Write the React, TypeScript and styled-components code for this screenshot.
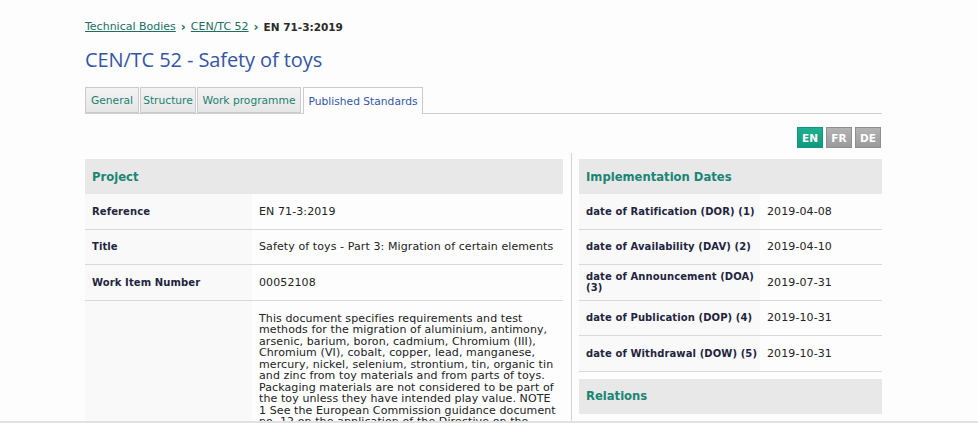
import React from 'react'
import styled, { createGlobalStyle } from 'styled-components'

const GlobalStyle = createGlobalStyle`
  html, body {
    margin: 0;
    padding: 0;
    background: #fdfdfd;
    font-family: "DejaVu Sans", Verdana, sans-serif;
    color: #222;
  }
`

const Page = styled.div`
  width: 797px;
  margin-left: 85px;
  padding-top: 20px;
`

const Breadcrumb = styled.nav`
  display: flex;
  align-items: center;
  gap: 5px;
  font-size: 11px;
  line-height: 14px;
`

const Crumb = styled.a`
  color: #1b6f63;
  text-decoration: underline;
`

const Sep = styled.span`
  color: #1b6f63;
  font-weight: bold;
  font-size: 12px;
`

const Current = styled.span`
  font-weight: bold;
  font-size: 10.5px;
  color: #2b2b2b;
`

const Title = styled.h1`
  margin: 12px 0 0;
  font-family: "Open Sans", sans-serif;
  font-weight: 400;
  font-size: 20px;
  line-height: 28px;
  color: #3456a4;
  letter-spacing: -0.1px;
`

const TabBar = styled.div`
  display: flex;
  gap: 1px;
  margin-top: 13px;
  border-bottom: 1px solid #cfcfcf;
  height: 26px;
`

const Tab = styled.div<{ $active?: boolean; $w: number }>`
  display: flex;
  align-items: center;
  justify-content: center;
  width: ${p => p.$w}px;
  box-sizing: border-box;
  white-space: nowrap;
  border: 1px solid #cbcbcb;
  border-bottom: ${p => (p.$active ? 'none' : '1px solid #cbcbcb')};
  background: ${p => (p.$active ? '#fdfdfd' : 'linear-gradient(#f3f3f3, #e6e6e6)')};
  height: ${p => (p.$active ? '27px' : '26px')};
  color: ${p => (p.$active ? '#3456a4' : '#1b7f72')};
  font-size: 10.7px;
  margin-left: ${p => (p.$active ? '1px' : '0')};
`

const LangBar = styled.div`
  display: flex;
  justify-content: flex-end;
  gap: 3px;
  margin-top: 13px;
  padding-right: 1px;
`

const Lang = styled.div<{ $active?: boolean }>`
  width: 26px;
  height: 21px;
  box-sizing: border-box;
  display: flex;
  align-items: center;
  justify-content: center;
  font-size: 10.5px;
  font-weight: bold;
  color: #fff;
  border: 1px solid ${p => (p.$active ? '#12957b' : '#8e8e8e')};
  background: ${p => (p.$active ? 'linear-gradient(#1fae90, #12987e)' : 'linear-gradient(#b3b3b3, #9a9a9a)')};
`

const Columns = styled.div`
  display: grid;
  grid-template-columns: 478px 319px;
  margin-top: 5px;
`

const LeftCol = styled.div`
  padding-top: 6px;
`

const RightCol = styled.div`
  margin-left: 8px;
  border-left: 1px solid #d2d2d2;
  padding: 6px 0 0 7px;
`

const Section = styled.div<{ $gap?: number }>`
  margin-top: ${p => p.$gap || 0}px;
`

const Header = styled.div`
  height: 35px;
  display: flex;
  align-items: center;
  padding: 0 7px;
  background: #e8e8e8;
  color: #1a8573;
  font-weight: bold;
  font-size: 11.6px;
`

const Row = styled.div<{ $label: number }>`
  display: grid;
  grid-template-columns: ${p => p.$label}px 1fr;
  border-bottom: 1px solid #d8d8d8;
  min-height: 34.6px;
`

const Label = styled.div`
  display: flex;
  align-items: center;
  padding: 0 0 0 7px;
  background: #f9f9f9;
  font-weight: bold;
  font-size: 10px;
  line-height: 11.5px;
  letter-spacing: 0.1px;
  color: #1f2540;
`

const Value = styled.div<{ $top?: boolean }>`
  display: flex;
  align-items: ${p => (p.$top ? 'flex-start' : 'center')};
  padding: ${p => (p.$top ? '12px 7px' : '0 7px')};
  font-size: 11px;
  line-height: 11.5px;
  letter-spacing: 0.1px;
  color: #222;
`

const BottomEdge = styled.div`
  position: fixed;
  left: 0;
  right: 0;
  bottom: 0;
  height: 2px;
  background: #e2e2e2;
`

const tabs: [string, number][] = [
  ['General', 54],
  ['Structure', 56],
  ['Work programme', 104],
]

const project = [
  ['Reference', 'EN 71-3:2019'],
  ['Title', 'Safety of toys - Part 3: Migration of certain elements'],
  ['Work Item Number', '00052108'],
]

const dates = [
  ['date of Ratification (DOR) (1)', '2019-04-08'],
  ['date of Availability (DAV) (2)', '2019-04-10'],
  ['date of Announcement (DOA) (3)', '2019-07-31'],
  ['date of Publication (DOP) (4)', '2019-10-31'],
  ['date of Withdrawal (DOW) (5)', '2019-10-31'],
]

const scope =
  'This document specifies requirements and test methods for the migration of aluminium, antimony, arsenic, barium, boron, cadmium, Chromium (III), Chromium (VI), cobalt, copper, lead, manganese, mercury, nickel, selenium, strontium, tin, organic tin and zinc from toy materials and from parts of toys. Packaging materials are not considered to be part of the toy unless they have intended play value. NOTE 1 See the European Commission guidance document no. 12 on the application of the Directive on the safety of toys.'

export default function App() {
  return (
    <>
      <GlobalStyle />
      <Page>
        <Breadcrumb>
          <Crumb>Technical Bodies</Crumb>
          <Sep>›</Sep>
          <Crumb>CEN/TC 52</Crumb>
          <Sep>›</Sep>
          <Current>EN 71-3:2019</Current>
        </Breadcrumb>

        <Title>CEN/TC 52 - Safety of toys</Title>

        <TabBar>
          {tabs.map(([t, w]) => (
            <Tab key={t} $w={w}>{t}</Tab>
          ))}
          <Tab $active $w={120}>Published Standards</Tab>
        </TabBar>

        <LangBar>
          <Lang $active>EN</Lang>
          <Lang>FR</Lang>
          <Lang>DE</Lang>
        </LangBar>

        <Columns>
          <LeftCol>
            <Header>Project</Header>
            {project.map(([k, v]) => (
              <Row key={k} $label={167}>
                <Label>{k}</Label>
                <Value>{v}</Value>
              </Row>
            ))}
            <Row $label={167}>
              <Label />
              <Value $top>{scope}</Value>
            </Row>
          </LeftCol>

          <RightCol>
            <Header>Implementation Dates</Header>
            {dates.map(([k, v]) => (
              <Row key={k} $label={181}>
                <Label>{k}</Label>
                <Value>{v}</Value>
              </Row>
            ))}
            <Section $gap={7}>
              <Header>Relations</Header>
            </Section>
          </RightCol>
        </Columns>
      </Page>
      <BottomEdge />
    </>
  )
}
